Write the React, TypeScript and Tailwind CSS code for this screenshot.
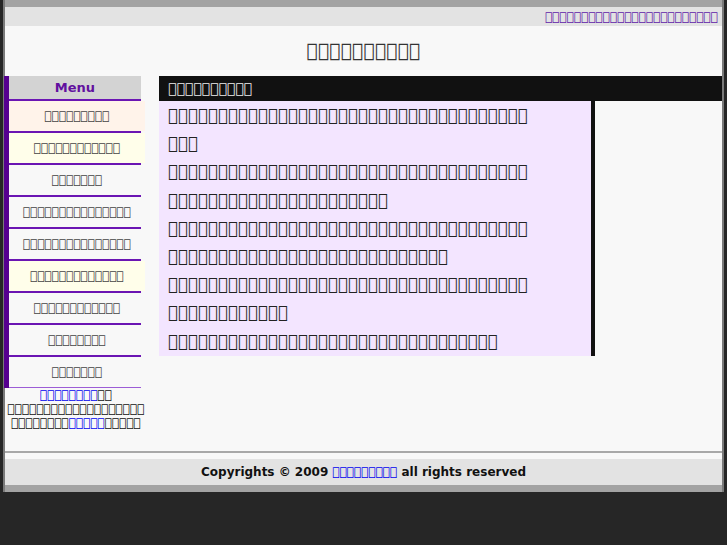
import React from "react";

// the source page's text shows as missing-glyph boxes; keep the same glyph counts
const box = (n: number) => "\uE000".repeat(n);

const menu = [
  { n: 9, bg: "bg-[#fff3ea]" },
  { n: 12, bg: "bg-[#fffeea]" },
  { n: 7, bg: "bg-[#f8f8f8]" },
  { n: 15, bg: "bg-[#f8f8f8]" },
  { n: 15, bg: "bg-[#f8f8f8]" },
  { n: 13, bg: "bg-[#fffeea]" },
  { n: 12, bg: "bg-[#f8f8f8]" },
  { n: 8, bg: "bg-[#f8f8f8]" },
  { n: 7, bg: "bg-[#f8f8f8]" },
];

// glyphs per wrapped line, per paragraph
const paragraphs = [[36, 3], [36, 22], [36, 28], [36, 12], [33]];

export default function App() {
  return (
    <div className="min-h-screen bg-[#262626] font-['DejaVu_Sans',sans-serif]">
      <div className="mx-[3px] border-x-2 border-[#7a7a7a] bg-[#f8f8f8]">
        <div className="h-[7px] bg-[#a3a3a3]" />
        <div className="flex h-[19px] items-center justify-end bg-[#e3e3e3] pr-[4px] text-[12px] leading-none">
          <a href="#" className="text-[#5f1aa8] no-underline">
            {box(24)}
          </a>
        </div>

        <h1 className="pt-[13px] pb-[15px] text-center text-[19px] leading-[22px] text-[#333]">{box(10)}</h1>

        <div className="flex items-start">
          {/* sidebar */}
          <div className="w-[137px] shrink-0 ml-[-1px]">
            <div className="border-l-[5px] border-[#55008f]">
              <div className="h-[23px] bg-[#d3d3d3] text-center text-[13px] font-bold leading-[23px] text-[#62109f]">
                Menu
              </div>
              <ul className="border-b border-[#9c5cd6]">
                {menu.map((m, i) => (
                  <li key={i} className="border-t-2 border-[#6b15b3]">
                    <a
                      href="#"
                      className={`block h-[30px] mr-[-4px] text-center text-[12px] leading-[30px] text-[#444] ${m.bg}`}
                    >
                      {box(m.n)}
                    </a>
                  </li>
                ))}
              </ul>
            </div>
            <p className="pl-[3px] mr-[-4px] text-center text-[12px] leading-[14px] text-[#111]">
              <a href="#" className="text-[#0000ee] underline">
                {box(8)}
              </a>
              {box(2)}
              <br />
              {box(19)}
              <br />
              {box(8)}
              <a href="#" className="text-[#0000ee] underline">
                {box(5)}
              </a>
              {box(5)}
            </p>
          </div>

          {/* main */}
          <div className="ml-[18px] flex-1">
            <h2 className="h-[25px] bg-[#111] pl-[9px] text-[14px] leading-[25px] text-[#eee]">{box(10)}</h2>
            <div className="w-[436px] border-r-4 border-[#111] bg-[#f3e5ff] pl-[9px] pt-[1px] text-[16.67px] leading-[28.2px] text-[#222]">
              {paragraphs.map((lines, i) => (
                <p key={i}>
                  {lines.map((n, j) => (
                    <React.Fragment key={j}>
                      {j > 0 && <br />}
                      {box(n)}
                    </React.Fragment>
                  ))}
                </p>
              ))}
            </div>
          </div>
        </div>

        <div className="mt-[21px] h-[8px] border-t-2 border-[#a8a8a8]" />
        <div className="h-[26px] bg-[#e3e3e3] text-center text-[12px] font-bold leading-[26px] text-[#111]">
          Copyrights © 2009{" "}
          <a href="#" className="font-normal text-[#0000ee] underline">
            {box(9)}
          </a>{" "}
          all rights reserved
        </div>
        <div className="h-[7px] bg-[#a3a3a3]" />
      </div>
    </div>
  );
}
